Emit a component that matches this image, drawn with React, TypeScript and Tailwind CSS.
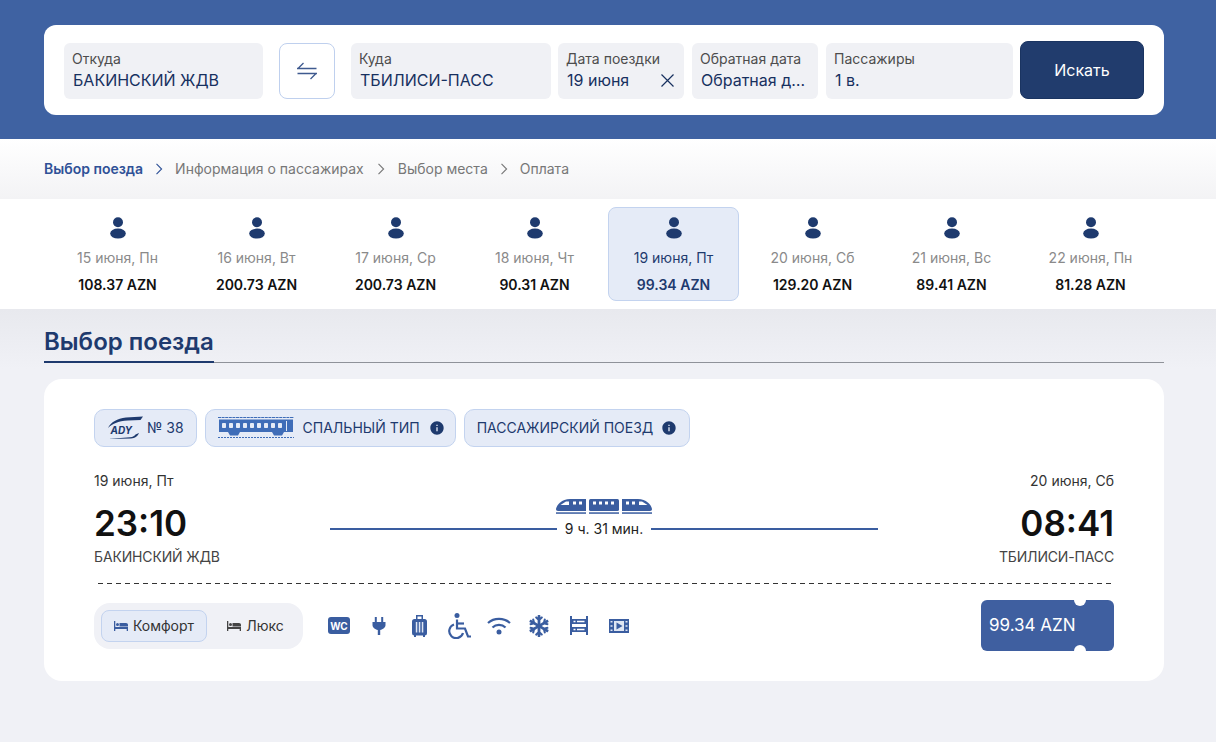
import { FaSnowflake } from "react-icons/fa"
import { MdInfo } from "react-icons/md"

const dates = [
  { date: "15 июня, Пн", price: "108.37 AZN" },
  { date: "16 июня, Вт", price: "200.73 AZN" },
  { date: "17 июня, Ср", price: "200.73 AZN" },
  { date: "18 июня, Чт", price: "90.31 AZN" },
  { date: "19 июня, Пт", price: "99.34 AZN", active: true },
  { date: "20 июня, Сб", price: "129.20 AZN" },
  { date: "21 июня, Вс", price: "89.41 AZN" },
  { date: "22 июня, Пн", price: "81.28 AZN" },
]

const steps = ["Информация о пассажирах", "Выбор места", "Оплата"]

function Field({ label, value, className, children }: { label: string; value: string; className: string; children?: React.ReactNode }) {
  return (
    <div className={`h-14 shrink-0 rounded-md bg-[#f0f1f5] pl-[9px] pr-3 pt-[6px] ${className}`}>
      <p className="-ml-px text-sm leading-[20px] text-[#4d4d4d]">{label}</p>
      <div className="flex items-center justify-between">
        <p className="truncate text-base leading-[22px] text-[#17305f]">{value}</p>
        {children}
      </div>
    </div>
  )
}

function Chevron({ dark }: { dark?: boolean }) {
  return (
    <svg width="8" height="12" viewBox="0 0 8 12" fill="none" className={dark ? "stroke-[#2f5197]" : "stroke-[#777]"} strokeWidth="1.1">
      <path d="M1.5 .8 6.6 6 1.5 11.2" />
    </svg>
  )
}

function Person() {
  return (
    <svg width="16" height="22" viewBox="0 0 16 22" className="fill-[#1e3a6e]">
      <circle cx="8" cy="5.3" r="5" />
      <ellipse cx="8" cy="16.6" rx="7.8" ry="5" />
    </svg>
  )
}

function AdyLogo() {
  return (
    <svg width="37" height="24" viewBox="0 0 37 24" className="fill-[#1e3a6e]">
      <path d="M1 12C4 6 10 2.500 19 1.500L36 0.500 33.500 4 21 4.500C11 5 5 8 1 12Z" />
      <path d="M1 23 24 22.500C28 22.300 31 20 32 17L28.500 18.500C27.500 20 26 21 23 21.200Z" />
      <text x="3.500" y="18" fontSize="10" fontWeight="700" fontStyle="italic" fontFamily="Inter, sans-serif">ADY</text>
    </svg>
  )
}

function Carriage() {
  return (
    <svg width="76" height="22" viewBox="0 0 76 22" className="fill-[#3f6db8]">
      <path d="M0 .5H76" stroke="#3f6db8" strokeWidth="1" strokeDasharray="3 .6" />
      <path d="M1 2.500H75V15H1Z" />
      {[4, 11, 18, 25, 32, 39, 46, 53, 60].map(x => (
        <rect key={x} x={x} y="6" width="4" height="5" rx=".8" fill="#e5ebf7" />
      ))}
      <rect x="68" y="4" width="1" height="10" fill="#e5ebf7" />
      <path d="M10 15H22L20 18.500H12ZM54 15H66L64 18.500H56Z" />
      <path d="M0 20.500H76" stroke="#3f6db8" strokeWidth="1" strokeDasharray="2 1" />
    </svg>
  )
}

function Bullet() {
  return (
    <svg width="30" height="16" viewBox="0 0 30 16" className="fill-[#3a5da0]">
      <path d="M0 11C.5 7 6 1 14 1H30V13H2C.6 13 0 12.300 0 11Z" />
      <path d="M4.500 7 10 3.500H13V7Z" fill="#fff" />
      <rect x="17" y="3.500" width="3" height="3" fill="#fff" />
      <rect x="23" y="3.500" width="3" height="3" fill="#fff" />
      <rect x="0" y="14.300" width="30" height="1.500" />
    </svg>
  )
}

function MiddleCar() {
  return (
    <svg width="30" height="16" viewBox="0 0 30 16" className="fill-[#3a5da0]">
      <rect x="0" y="1" width="30" height="12" rx="1.500" />
      {[4, 10, 16, 22].map(x => (
        <rect key={x} x={x} y="3.500" width="3" height="3" fill="#fff" />
      ))}
      <rect x="0" y="14.300" width="30" height="1.500" />
    </svg>
  )
}

function BedIcon({ className }: { className: string }) {
  return (
    <svg width="14" height="10" viewBox="0 0 14 10" className={className}>
      <path d="M0 0H1.300V6H14V10H12.700V8H1.300V10H0Z" />
      <circle cx="3.500" cy="3.600" r="1.500" />
      <path d="M5.500 2H12C13.200 2 14 2.800 14 4V5.500H5.500Z" />
    </svg>
  )
}

function WcIcon() {
  return (
    <div className="flex h-[17px] w-[22px] items-center justify-center rounded-[3px] bg-[#3a5da0] text-[10px] font-bold leading-none text-white">
      WC
    </div>
  )
}

function PlugIcon() {
  return (
    <svg width="14" height="18" viewBox="0 0 14 18" className="fill-[#3a5da0]">
      <path d="M2.800 0H4.800V5H2.800ZM9.200 0H11.200V5H9.200Z" />
      <path d="M.5 5H13.500V8C13.500 10.500 11 12.500 8.200 13V18H5.800V13C3 12.500 .5 10.500 .5 8Z" />
    </svg>
  )
}

function LuggageIcon() {
  return (
    <svg width="15" height="22" viewBox="0 0 15 22" className="fill-[#3a5da0]">
      <path d="M4 0H11V5H9.500V1.500H5.500V5H4Z" />
      <rect x="0" y="4" width="15" height="16.500" rx="2.500" />
      <path d="M3.800 7H5.300V17.500H3.800ZM6.800 7H8.300V17.500H6.800ZM9.800 7H11.300V17.500H9.800Z" fill="#dfe6f3" />
      <path d="M2 20H4V22H2ZM11 20H13V22H11Z" />
    </svg>
  )
}

function WheelchairIcon() {
  return (
    <svg width="25" height="26" viewBox="0 0 25 26" fill="none" stroke="#3a5da0" strokeWidth="2.200">
      <circle cx="10" cy="2.600" r="2.500" fill="#3a5da0" stroke="none" />
      <path d="M10 6.500V15.500H18L21 23.500H24" />
      <path d="M10 10.500H17" />
      <path d="M7 11.500A7 7 0 1 0 16 20" />
    </svg>
  )
}

function WifiIcon() {
  return (
    <svg width="24" height="18" viewBox="0 0 24 18" fill="none" stroke="#3a5da0" strokeWidth="2.200">
      <path d="M1 6C7 .500 17 .500 23 6" />
      <path d="M5.500 10.500C9 7 15 7 18.500 10.500" />
      <circle cx="12" cy="15" r="2.500" fill="#3a5da0" stroke="none" />
    </svg>
  )
}

function SleeperIcon() {
  return (
    <svg width="18" height="19" viewBox="0 0 18 19" className="fill-[#3a5da0]">
      <path d="M0 0H2V19H0ZM16 0H18V19H16Z" />
      <path d="M2 3H16V8H2ZM2 11H16V16H2Z" />
      <path d="M3.500 4.800H5.500V6.200H3.500ZM7 4.800H14.500V6.200H7ZM3.500 12.800H5.500V14.200H3.500ZM7 12.800H14.500V14.200H7Z" fill="#fff" />
    </svg>
  )
}

function VideoIcon() {
  return (
    <svg width="20" height="14" viewBox="0 0 20 14" className="fill-[#3a5da0]">
      <path d="M0 0H20V14H0Z" />
      <path d="M5 2H15V12H5Z" fill="#dfe6f3" />
      <path d="M7.500 3.500 13.500 7 7.500 10.500Z" />
      <path d="M1.500 2H3.500V3.500H1.500ZM1.500 6.200H3.500V7.700H1.500ZM1.500 10.500H3.500V12H1.500ZM16.500 2H18.500V3.500H16.500ZM16.500 6.200H18.500V7.700H16.500ZM16.500 10.500H18.500V12H16.500Z" fill="#dfe6f3" />
    </svg>
  )
}

export default function App() {
  return (
    <div className="min-h-[742px] w-full bg-[#f0f1f6] font-['Inter',sans-serif]">
      {/* Search */}
      <header className="h-[139px] bg-[#3f62a2] pl-11 pr-[52px] pt-[25px]">
        <div className="flex h-[90px] items-end rounded-xl bg-white pb-4 pl-5 pr-5">
          <div className="flex items-end">
            <Field label="Откуда" value="БАКИНСКИЙ ЖДВ" className="w-[199px]" />
            <button className="mx-4 flex h-14 w-14 items-center justify-center rounded-lg border border-[#bfd0ee] bg-white">
              <svg width="20" height="18" viewBox="0 0 20 18" fill="none" stroke="#3f5a8f" strokeWidth="1.300">
                <path d="M0 6.500H19.500M6.500 1 1 6.500" />
                <path d="M20 11.500H.500M13.500 17 19 11.500" />
              </svg>
            </button>
            <Field label="Куда" value="ТБИЛИСИ-ПАСС" className="w-[200px]" />
            <Field label="Дата поездки" value="19 июня" className="ml-[7px] w-[126px]">
              <svg width="13" height="13" viewBox="0 0 13 13" fill="none" stroke="#17305f" strokeWidth="1.200" className="-mr-[2px] shrink-0">
                <path d="M.5 .5 12.500 12.500M12.500 .5 .5 12.500" />
              </svg>
            </Field>
            <Field label="Обратная дата" value="Обратная дата" className="ml-2 w-[126px]" />
            <Field label="Пассажиры" value="1 в." className="ml-2 w-[187px]" />
          </div>
          <button className="ml-[7px] h-[58px] w-[124px] rounded-lg border border-[#1a3461] bg-[#213c6d] text-base text-white">
            Искать
          </button>
        </div>
      </header>

      {/* Steps */}
      <nav className="flex h-[60px] items-center bg-gradient-to-b from-white to-[#f3f3f5] px-11 text-sm">
        <span className="font-semibold text-[#2f5197]">Выбор поезда</span>
        <span className="mx-3"><Chevron dark /></span>
        {steps.map((step, i) => (
          <div key={step} className="flex items-center">
            <span className="text-[#777]">{step}</span>
            {i < steps.length - 1 && <span className={i === 0 ? "mx-[13px]" : "mx-3"}><Chevron /></span>}
          </div>
        ))}
      </nav>

      {/* Dates */}
      <div className="flex h-[110px] items-center gap-2 bg-white px-[52px]">
        {dates.map(d => (
          <div
            key={d.date}
            className={`flex h-[94px] w-[131px] shrink-0 flex-col items-center rounded-lg border pt-[9px] ${d.active ? "border-[#c3d3ef] bg-[#e5ebf7]" : "border-transparent"}`}
          >
            <Person />
            <p className={`mt-[9px] text-sm leading-[20px] ${d.active ? "text-[#1e3a6e]" : "text-[#8a8a8a]"}`}>{d.date}</p>
            <p className={`mt-[7px] text-sm font-semibold leading-[20px] ${d.active ? "text-[#1e3a6e]" : "text-[#111]"}`}>{d.price}</p>
          </div>
        ))}
      </div>

      {/* Results */}
      <main className="bg-gradient-to-b from-[#e8e9ee] to-[#f0f1f6] to-[60px] pl-11 pr-[52px]">
        <div className="border-b border-[#8f9299] pt-[15px]">
          <h1 className="-mb-px inline-block border-b-2 border-[#1e3a6e] pb-px text-2xl font-semibold leading-[36px] text-[#1e3a6e]">
            Выбор поезда
          </h1>
        </div>

        <section className="mt-4 h-[302px] rounded-[18px] bg-white px-[50px] pt-[30px]">
          <div className="flex gap-2">
            <div className="flex h-[38px] items-center gap-[3px] rounded-[10px] border border-[#c3d3ef] bg-[#e5ebf7] px-3 text-sm text-[#1e3a6e]">
              <AdyLogo />
              № 38
            </div>
            <div className="flex h-[38px] items-center gap-[9px] rounded-[10px] border border-[#c3d3ef] bg-[#e5ebf7] pl-3 pr-[10px] text-sm text-[#1e3a6e]">
              <Carriage />
              СПАЛЬНЫЙ ТИП
              <MdInfo size={16} />
            </div>
            <div className="flex h-[38px] items-center gap-2 rounded-[10px] border border-[#c3d3ef] bg-[#e5ebf7] px-3 text-sm text-[#1e3a6e]">
              ПАССАЖИРСКИЙ ПОЕЗД
              <MdInfo size={16} />
            </div>
          </div>

          <div className="mt-6 flex items-start justify-between">
            <div className="w-[236px]">
              <p className="text-sm leading-[20px] text-[#333]">19 июня, Пт</p>
              <p className="mt-[10px] text-[35px] font-semibold leading-[44px] text-[#111]">23:10</p>
              <p className="mt-[2px] text-sm leading-[20px] tracking-[-0.15px] text-[#444]">БАКИНСКИЙ ЖДВ</p>
            </div>
            <div className="w-[548px] pt-[27px]">
              <div className="flex justify-center gap-[3px] pb-[2px]">
                <Bullet />
                <MiddleCar />
                <div className="-scale-x-100"><Bullet /></div>
              </div>
              <div className="flex items-center gap-2">
                <div className="h-0.5 flex-1 bg-[#3a5da0]" />
                <span className="text-sm leading-[26px] text-[#222]">9 ч. 31 мин.</span>
                <div className="h-0.5 flex-1 bg-[#3a5da0]" />
              </div>
            </div>
            <div className="w-[236px] text-right">
              <p className="text-sm leading-[20px] text-[#333]">20 июня, Сб</p>
              <p className="mt-[10px] text-[35px] font-semibold leading-[44px] text-[#111]">08:41</p>
              <p className="mt-[2px] text-sm leading-[20px] tracking-[-0.15px] text-[#444]">ТБИЛИСИ-ПАСС</p>
            </div>
          </div>

          <div className="ml-1 mt-4 h-px bg-[repeating-linear-gradient(90deg,#333_0,#333_5px,transparent_5px,transparent_9px)]" />

          <div className="mt-4 flex items-center justify-between">
            <div className="flex h-[46px] w-[209px] items-center gap-[5px] rounded-2xl bg-[#f0f1f6] px-[7px]">
              <div className="flex h-8 w-[106px] items-center justify-center gap-[5px] rounded-lg border border-[#c3d3ef] bg-[#e5ebf7] text-sm text-[#333]">
                <BedIcon className="fill-[#3a5da0]" />
                Комфорт
              </div>
              <div className="flex h-8 flex-1 items-center justify-center gap-[5px] pl-[3px] text-sm text-[#333]">
                <BedIcon className="fill-[#444]" />
                Люкс
              </div>
            </div>

            <div className="ml-4 flex flex-1 items-center text-[#3a5da0]">
              {[
                <WcIcon />,
                <PlugIcon />,
                <LuggageIcon />,
                <WheelchairIcon />,
                <WifiIcon />,
                <FaSnowflake size={22} />,
                <SleeperIcon />,
                <VideoIcon />,
              ].map((icon, i) => (
                <div key={i} className="flex h-7 w-10 items-center justify-center">{icon}</div>
              ))}
            </div>

            <div className="relative flex h-[51px] w-[133px] items-center overflow-hidden rounded-md bg-[#3f5fa0] pl-2 text-[17px] text-white">
              99.34 AZN
              <span className="absolute -top-[6px] left-[93px] h-[12px] w-[12px] rounded-full bg-white" />
              <span className="absolute -bottom-[6px] left-[93px] h-[12px] w-[12px] rounded-full bg-white" />
            </div>
          </div>
        </section>
      </main>
    </div>
  )
}
